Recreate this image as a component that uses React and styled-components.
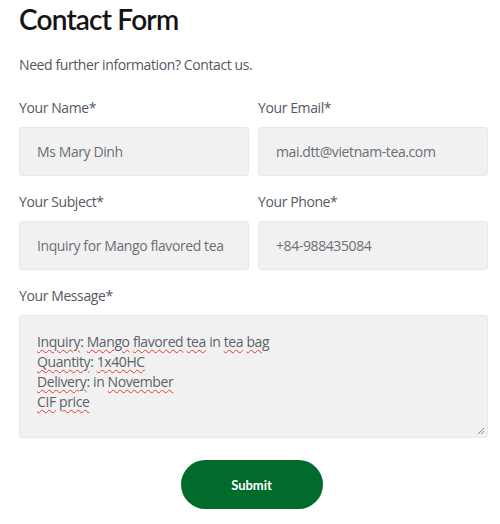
import React from "react";
import styled, { createGlobalStyle } from "styled-components";

const Global = createGlobalStyle`
  html, body { margin: 0; padding: 0; background: #fff; }
  body { font-family: "Open Sans", "Liberation Sans", sans-serif; }
  * { box-sizing: border-box; }
`;

const Page = styled.div`
  padding: 0 12px 0 19px;
  width: 500px;
`;

const Title = styled.h1`
  margin: 0;
  font-family: "Lato", "DejaVu Sans", sans-serif;
  font-weight: 600;
  font-size: 28px;
  line-height: 38px;
  color: #141414;
  letter-spacing: -0.8px;
`;

const Intro = styled.p`
  margin: 17px 0 23px;
  font-size: 14px;
  line-height: 20px;
  letter-spacing: -0.4px;
  color: #54595f;
`;

const Grid = styled.div`
  display: grid;
  grid-template-columns: 230px 230px;
  column-gap: 9px;
  row-gap: 16px;
`;

const Field = styled.div`
  display: flex;
  flex-direction: column;
  gap: 9px;
  grid-column: ${(p) => (p.$full ? "1 / -1" : "auto")};
`;

const Label = styled.label`
  font-size: 14px;
  line-height: 20px;
  letter-spacing: -0.4px;
  color: #54595f;
`;

const Box = styled.div`
  height: ${(p) => p.$h || 49}px;
  background: #f1f1f1;
  border: 1px solid #e8e8e8;
  border-radius: 3px;
  padding: ${(p) => (p.$multi ? "16px 17px" : "0 17px")};
  display: flex;
  align-items: ${(p) => (p.$multi ? "flex-start" : "center")};
  font-size: 14px;
  line-height: 20px;
  letter-spacing: -0.4px;
  color: #6b6f75;
  position: relative;
  white-space: nowrap;
`;

const Lines = styled.div`
  display: flex;
  flex-direction: column;
  color: #5d6168;
`;

const Miss = styled.span`
  text-decoration: underline wavy #e53935;
  text-decoration-thickness: 1px;
  text-underline-offset: 2px;
`;

const Grip = styled.svg`
  position: absolute;
  right: 2px;
  bottom: 2px;
`;

const Actions = styled.div`
  display: flex;
  justify-content: center;
  margin-top: 22px;
  padding-right: 4px;
`;

const Submit = styled.button`
  width: 142px;
  height: 49px;
  border: none;
  border-radius: 25px;
  background: #006b2b;
  color: #fff;
  font-family: "Lato", "DejaVu Sans", sans-serif;
  font-weight: 700;
  font-size: 13px;
  cursor: pointer;
`;

const W = ({ children }) => <Miss>{children}</Miss>;

export default function App() {
  return (
    <Page>
      <Global />
      <Title>Contact Form</Title>
      <Intro>Need further information? Contact us.</Intro>
      <Grid>
        <Field>
          <Label>Your Name*</Label>
          <Box>Ms Mary Dinh</Box>
        </Field>
        <Field>
          <Label>Your Email*</Label>
          <Box>mai.dtt@vietnam-tea.com</Box>
        </Field>
        <Field>
          <Label>Your Subject*</Label>
          <Box>Inquiry for Mango flavored tea</Box>
        </Field>
        <Field>
          <Label>Your Phone*</Label>
          <Box>+84-988435084</Box>
        </Field>
        <Field $full>
          <Label>Your Message*</Label>
          <Box $multi $h={123}>
            <Lines>
              <span>
                <W>Inquiry</W>: <W>Mango</W> <W>flavored</W> <W>tea</W> in <W>tea</W> <W>bag</W>
              </span>
              <span>
                <W>Quantity</W>: <W>1x40HC</W>
              </span>
              <span>
                <W>Delivery</W>: in <W>November</W>
              </span>
              <span>
                <W>CIF</W> <W>price</W>
              </span>
            </Lines>
            <Grip width="8" height="8" viewBox="0 0 8 8">
              <path d="M7 1 L1 7 M7 4 L4 7" stroke="#8a8a8a" strokeWidth="1" />
            </Grip>
          </Box>
        </Field>
      </Grid>
      <Actions>
        <Submit>Submit</Submit>
      </Actions>
    </Page>
  );
}
